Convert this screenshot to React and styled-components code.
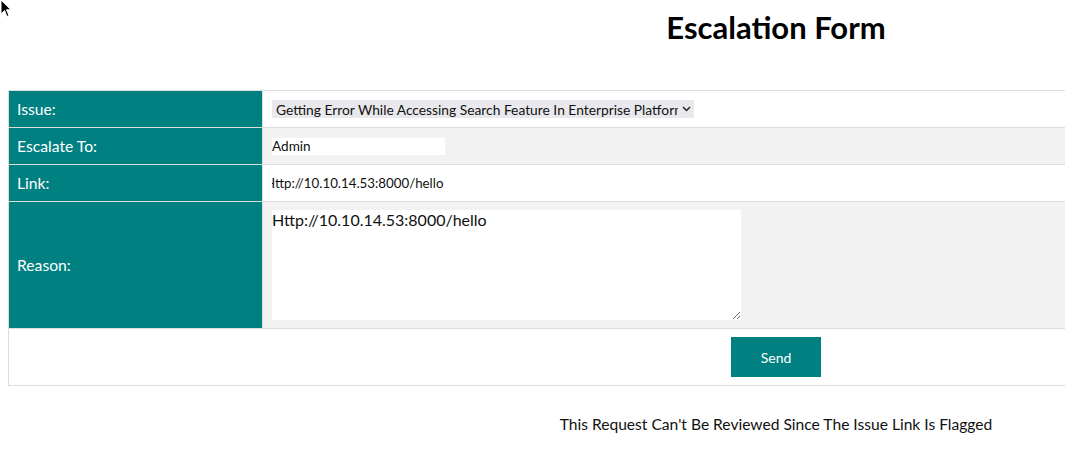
import React from "react";
import styled, { createGlobalStyle } from "styled-components";

const GlobalStyle = createGlobalStyle`
  html {
    overflow: hidden;
    background: #fff;
  }
  body {
    margin: 8px 0 8px 8px;
    overflow: visible;
    font-family: "Lato", "Noto Sans", sans-serif;
    color: #111;
  }
`;

const Page = styled.div`
  width: 1536px;
  display: flex;
  flex-direction: column;
`;

const Title = styled.h2`
  margin: 0;
  height: 82px;
  text-align: center;
  font-size: 31px;
  font-weight: 700;
  line-height: 38px;
  color: #000;
`;

const FormTable = styled.table`
  width: 100%;
  border-collapse: collapse;
  border: 1px solid #ddd;
`;

const Row = styled.tr`
  background: ${(p) => (p.$shade ? "#f2f2f2" : "#fff")};
`;

const Label = styled.td`
  width: 237px;
  height: ${(p) => p.$h || 20}px;
  padding: 8px;
  border: 1px solid #ddd;
  background: #008080;
  color: #fff;
  font-size: 15.7px;
  vertical-align: middle;
`;

const Value = styled.td`
  padding: 8px 8px 8px 9px;
  border: 1px solid #ddd;
  vertical-align: middle;
`;

const Select = styled.select`
  appearance: none;
  width: 422px;
  height: 18px;
  padding: 0 16px 0 4px;
  border: none;
  border-radius: 0;
  font-family: inherit;
  font-size: 13.8px;
  color: #111;
  background: #e9e9ed url("data:image/svg+xml;utf8,<svg xmlns='http://www.w3.org/2000/svg' width='9' height='6' viewBox='0 0 9 6'><path d='M1 1l3.5 3.5 3.5-3.5' fill='none' stroke='%23222' stroke-width='1.5'/></svg>") no-repeat right 3px center;
  display: block;
`;

const TextInput = styled.input`
  display: block;
  width: ${(p) => p.$w || 173}px;
  height: 17px;
  padding: 0;
  border: none;
  outline: none;
  background: #fff;
  font-family: inherit;
  font-size: 13.6px;
  color: #111;
`;

const LinkInput = styled(TextInput)`
  font-size: 13.3px;
  text-indent: -7px;
`;

const Reason = styled.textarea`
  display: block;
  width: 469px;
  height: 110px;
  padding: 0;
  border: none;
  outline: none;
  background: #fff;
  font-family: inherit;
  font-size: 16px;
  color: #111;
  resize: both;
`;

const ButtonCell = styled.td`
  height: 40px;
  padding: 8px;
  text-align: center;
  vertical-align: middle;
`;

const SendButton = styled.button`
  width: 90px;
  height: 40px;
  border: none;
  background: #008080;
  color: #fff;
  font-family: inherit;
  font-size: 14px;
`;

const Message = styled.p`
  margin: 29px 0 0;
  text-align: center;
  font-size: 15.6px;
  color: #111;
`;

const Cursor = styled.svg`
  position: fixed;
  left: 0;
  top: 0;
`;

export default function App() {
  return (
    <>
      <GlobalStyle />
      <Page>
        <Title>Escalation Form</Title>
        <FormTable>
          <tbody>
            <Row>
              <Label>Issue:</Label>
              <Value>
                <Select defaultValue="a">
                  <option value="a">
                    Getting Error While Accessing Search Feature In Enterprise Platform
                  </option>
                </Select>
              </Value>
            </Row>
            <Row $shade>
              <Label>Escalate To:</Label>
              <Value>
                <TextInput defaultValue="Admin" readOnly />
              </Value>
            </Row>
            <Row>
              <Label>Link:</Label>
              <Value>
                <LinkInput $w={173} defaultValue="Http://10.10.14.53:8000/hello" readOnly />
              </Value>
            </Row>
            <Row $shade>
              <Label $h={108}>Reason:</Label>
              <Value>
                <Reason defaultValue="Http://10.10.14.53:8000/hello" readOnly />
              </Value>
            </Row>
            <Row>
              <ButtonCell colSpan={2}>
                <SendButton>Send</SendButton>
              </ButtonCell>
            </Row>
          </tbody>
        </FormTable>
        <Message>This Request Can't Be Reviewed Since The Issue Link Is Flagged</Message>
      </Page>
      <Cursor width="12" height="18" viewBox="0 0 12 18">
        <path d="M1 0 L1 14 L4.5 10.5 L7 16.5 L9 15.5 L6.5 9.8 L11 9.8 Z" fill="#000" stroke="#fff" strokeWidth="1" />
      </Cursor>
    </>
  );
}
